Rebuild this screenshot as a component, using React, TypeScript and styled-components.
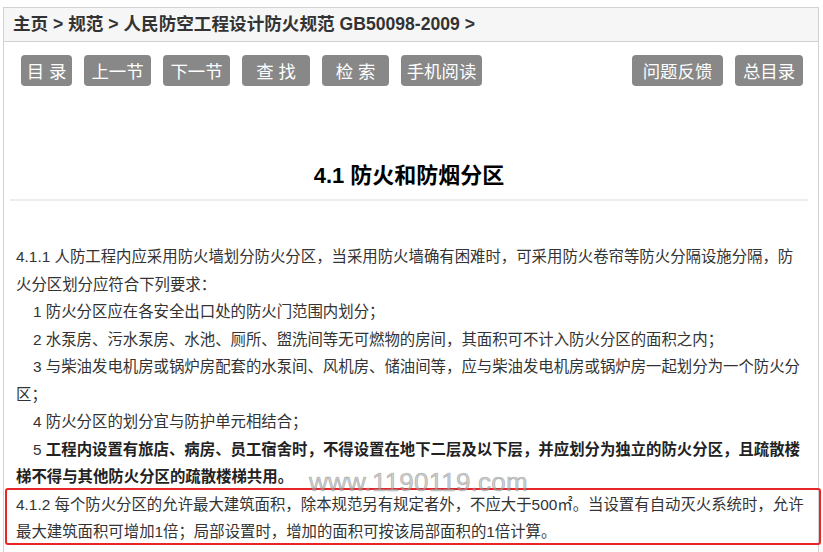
import React from "react";
import styled, { createGlobalStyle } from "styled-components";

const GlobalStyle = createGlobalStyle`
  html, body {
    margin: 0;
    padding: 0;
    overflow: hidden;
    background: #fff;
  }
  body {
    font-family: "Liberation Sans", "Noto Sans CJK SC", sans-serif;
  }
`;

const Page = styled.div`
  position: relative;
  margin: 7px 4px 0 3px;
  border: 1px solid #d2d2d2;
  min-height: 600px;
`;

const Crumbs = styled.div`
  height: 33px;
  line-height: 33px;
  padding-left: 9px;
  background: #f6f6f6;
  border-bottom: 1px solid #d2d2d2;
  font-size: 17.6px;
  font-weight: bold;
  color: #333;
  white-space: nowrap;
`;

const Toolbar = styled.div`
  display: flex;
  justify-content: space-between;
  padding: 13px 15px 0 17px;
`;

const Group = styled.div`
  display: flex;
  gap: 12px;
`;

const Btn = styled.a<{ $w: number }>`
  display: flex;
  align-items: center;
  justify-content: center;
  width: ${(p) => p.$w}px;
  height: 31px;
  border-radius: 4px;
  background: #888;
  color: #fff;
  font-size: 17.4px;
  white-space: pre;
  cursor: pointer;
`;

const Title = styled.h1`
  margin: 75px 10px 0 6px;
  padding-bottom: 8px;
  border-bottom: 2px solid #ececec;
  font-size: 22px;
  line-height: 30px;
  font-weight: bold;
  text-align: center;
  color: #000;
`;

const Body = styled.div`
  margin-top: 42px;
  padding: 0 12px;
  font-size: 15.4px;
  line-height: 27.5px;
  color: #333;
`;

const Para = styled.p<{ $indent?: boolean }>`
  margin: 0;
  text-indent: ${(p) => (p.$indent ? "17px" : "0")};
`;

const Strong = styled.b`
  font-weight: bold;
  color: #222;
`;

// red annotation frame drawn around 4.1.2
const Highlight = styled.div`
  margin: -3px -15px 0 -11px;
  padding: 1px 13px 0 9px;
  height: 52px;
  border: 2px solid #e8262a;
  border-radius: 3px;
`;

const Watermark = styled.div`
  position: absolute;
  left: 305px;
  top: 461px;
  font-size: 26px;
  line-height: 26px;
  color: rgba(175, 175, 175, 0.6);
  -webkit-text-stroke: 0.7px rgba(110, 110, 110, 0.45);
  letter-spacing: 0.2px;
  pointer-events: none;
  white-space: nowrap;
`;

const leftButtons = [
  { label: "目 录", w: 51 },
  { label: "上一节", w: 67 },
  { label: "下一节", w: 67 },
  { label: "查 找", w: 68 },
  { label: "检 索", w: 67 },
  { label: "手机阅读", w: 81 },
];

const rightButtons = [
  { label: "问题反馈", w: 91 },
  { label: "总目录", w: 68 },
];

export default function App() {
  return (
    <>
      <GlobalStyle />
      <Page>
        <Crumbs>主页 &gt; 规范 &gt; 人民防空工程设计防火规范 GB50098-2009 &gt;</Crumbs>
        <Toolbar>
          <Group>
            {leftButtons.map((b) => (
              <Btn key={b.label} $w={b.w}>{b.label}</Btn>
            ))}
          </Group>
          <Group>
            {rightButtons.map((b) => (
              <Btn key={b.label} $w={b.w}>{b.label}</Btn>
            ))}
          </Group>
        </Toolbar>
        <Title>4.1 防火和防烟分区</Title>
        <Body>
          <Para>
            4.1.1 人防工程内应采用防火墙划分防火分区，当采用防火墙确有困难时，可采用防火卷帘等防火分隔设施分隔，防火分区划分应符合下列要求：
          </Para>
          <Para $indent>1 防火分区应在各安全出口处的防火门范围内划分；</Para>
          <Para $indent>2 水泵房、污水泵房、水池、厕所、盥洗间等无可燃物的房间，其面积可不计入防火分区的面积之内；</Para>
          <Para $indent>3 与柴油发电机房或锅炉房配套的水泵间、风机房、储油间等，应与柴油发电机房或锅炉房一起划分为一个防火分区；</Para>
          <Para $indent>4 防火分区的划分宜与防护单元相结合；</Para>
          <Para $indent>
            5 <Strong>工程内设置有旅店、病房、员工宿舍时，不得设置在地下二层及以下层，并应划分为独立的防火分区，且疏散楼梯不得与其他防火分区的疏散楼梯共用。</Strong>
          </Para>
          <Highlight>
            <Para>
              4.1.2 每个防火分区的允许最大建筑面积，除本规范另有规定者外，不应大于500㎡。当设置有自动灭火系统时，允许最大建筑面积可增加1倍；局部设置时，增加的面积可按该局部面积的1倍计算。
            </Para>
          </Highlight>
        </Body>
        <Watermark>www.1190119.com</Watermark>
      </Page>
    </>
  );
}
